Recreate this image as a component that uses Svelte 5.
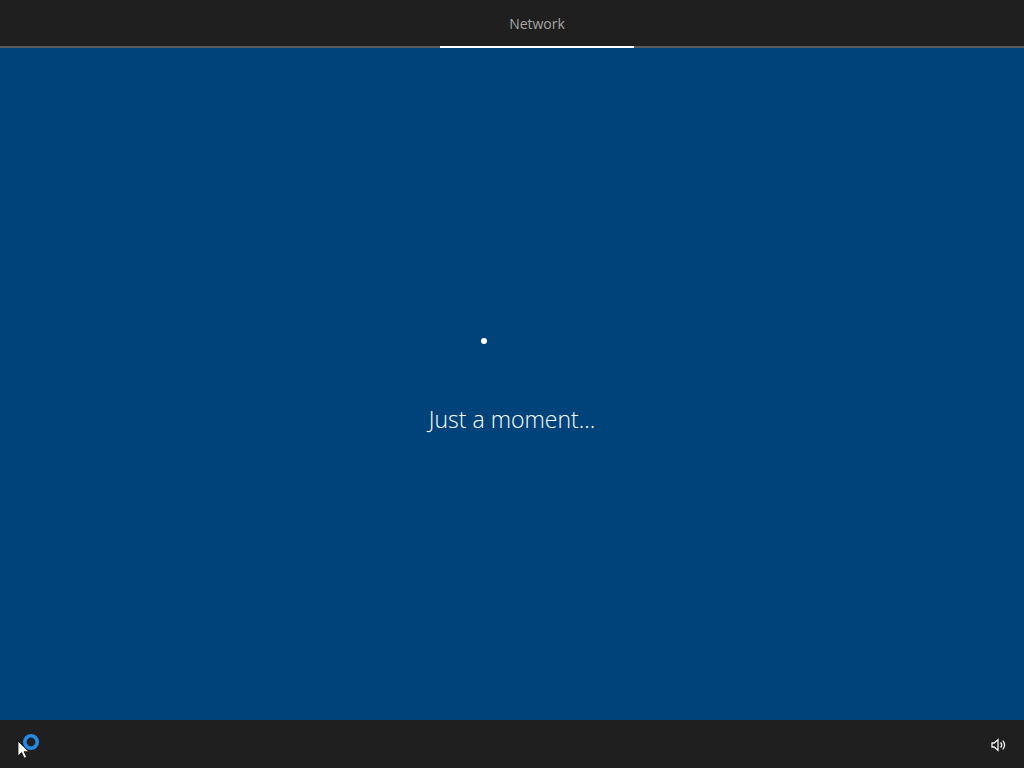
<script>
  const steps = ['Network'];
</script>

<div class="screen">
  <header class="topbar">
    <nav class="steps">
      {#each steps as step (step)}
        <div class="step active">{step}</div>
      {/each}
    </nav>
  </header>

  <main class="content">
    <div class="spinner"><span class="dot"></span></div>
    <p class="message">Just a moment...</p>
  </main>

  <footer class="bottombar">
    <div class="ease">
      <svg class="ring" width="18" height="18" viewBox="0 0 18 18" aria-hidden="true">
        <circle cx="9" cy="9" r="6.2" fill="none" stroke="#2389e3" stroke-width="3.6" />
      </svg>
      <svg class="cursor" width="13" height="19" viewBox="0 0 13 19" aria-hidden="true">
        <path d="M1 1v15l3.6-3.4 2.6 5.6 2.4-1.1-2.6-5.4h4.8z" fill="#fff" stroke="#111" stroke-width="0.8" />
      </svg>
    </div>
    <svg class="speaker" width="16" height="14" viewBox="0 0 16 14" fill="none" stroke="#f2f2f2" stroke-width="1.3" aria-hidden="true">
      <path d="M1 5h2.2L7 1.6v10.8L3.2 9H1z" />
      <path d="M9.6 4.4a4 4 0 0 1 0 5.2" />
      <path d="M11.8 2.6a7 7 0 0 1 0 8.8" />
    </svg>
  </footer>
</div>

<style>
  :global(body) {
    margin: 0;
    background: #00437a;
  }

  .screen {
    width: 1024px;
    height: 768px;
    display: flex;
    flex-direction: column;
    overflow: hidden;
    font-family: "Open Sans", "Liberation Sans", sans-serif;
  }

  .topbar {
    height: 46px;
    flex: none;
    background: #1f1f1f;
    border-bottom: 2px solid #5a5a5a;
    display: flex;
    padding-left: 440px;
  }

  .steps {
    display: flex;
    height: 48px;
  }

  .step {
    width: 194px;
    height: 46px;
    box-sizing: content-box;
    text-align: center;
    line-height: 48px;
    font-size: 14px;
    color: #a6a6a6;
  }

  .step.active {
    border-bottom: 2px solid #fff;
  }

  .content {
    flex: 1;
    background: #00437a;
    display: flex;
    flex-direction: column;
    align-items: center;
    padding-top: 290px;
  }

  .spinner {
    width: 6px;
    height: 6px;
    margin-left: -56px;
  }

  .dot {
    display: block;
    width: 6px;
    height: 6px;
    border-radius: 50%;
    background: #fff;
  }

  .message {
    margin: 60px 0 0;
    font-size: 23px;
    line-height: 30px;
    color: #fff;
    font-weight: 300;
  }

  .bottombar {
    height: 48px;
    flex: none;
    background: #1f1f1f;
    display: flex;
    align-items: center;
    justify-content: space-between;
    padding: 0 17px 0 16px;
  }

  .speaker {
    margin-top: 2px;
  }

  .ease {
    position: relative;
    width: 24px;
    height: 30px;
  }

  .ring {
    position: absolute;
    left: 6px;
    top: 4px;
  }

  .cursor {
    position: absolute;
    left: 1px;
    top: 11px;
  }
</style>
